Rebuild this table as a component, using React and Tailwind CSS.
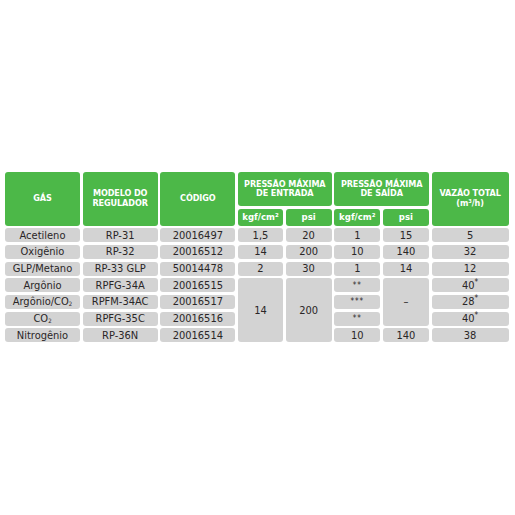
import React from "react";

const font = { fontFamily: '"DejaVu Sans Condensed", "Liberation Sans Narrow", "Liberation Sans", sans-serif' };

// grid placement per cell, written out so Tailwind sees every class
const Head = ({ className = "", children }) => (
  <div
    className={`bg-[#4cb848] rounded-[3px] flex items-center justify-center text-center text-white font-bold uppercase text-[9px] ${className}`}
  >
    <div className="leading-[9.5px] tracking-[-0.1px]">{children}</div>
  </div>
);

const Sub = ({ className = "", children }) => (
  <div
    className={`bg-[#4cb848] rounded-[3px] flex items-center justify-center text-white font-bold text-[9.5px] ${className}`}
  >
    <span>{children}</span>
  </div>
);

const Cell = ({ className = "", children }) => (
  <div
    className={`bg-[#d3d3d3] rounded-[3px] flex items-center justify-center text-[#2a2627] text-[11px] leading-none ${className}`}
  >
    <span>{children}</span>
  </div>
);

const Sup = ({ children }) => <sup className="text-[8px]">{children}</sup>;
const Stars = ({ n }) => <span className="text-[8px] tracking-[1px] relative -top-[1px]">{n}</span>;
const Sub2 = () => <sub className="text-[6px] relative top-[1px]">2</sub>;

const rows = [
  ["Acetileno", "RP-31", "20016497"],
  ["Oxigênio", "RP-32", "20016512"],
  ["GLP/Metano", "RP-33 GLP", "50014478"],
  ["Argônio", "RPFG-34A", "20016515"],
  [<>Argônio/CO<Sub2 /></>, "RPFM-34AC", "20016517"],
  [<>CO<Sub2 /></>, "RPFG-35C", "20016516"],
  ["Nitrogênio", "RP-36N", "20016514"],
];

export default function App() {
  return (
    <div className="w-[515px] h-[515px] bg-white pt-[172px] pl-[5px]" style={font}>
      <div className="grid grid-cols-[75px_75px_75px_45px_46px_46px_46px_77px] grid-rows-[34px_17px_14px_14px_14px_14px_14px_14px_14px] gap-[2.67px]">
        {/* header */}
        <Head className="col-start-1 row-start-1 row-span-2">Gás</Head>
        <Head className="col-start-2 row-start-1 row-span-2">
          Modelo do
          <br />
          Regulador
        </Head>
        <Head className="col-start-3 row-start-1 row-span-2">Código</Head>
        <Head className="col-start-4 col-span-2 row-start-1">
          Pressão máxima
          <br />
          de entrada
        </Head>
        <Head className="col-start-6 col-span-2 row-start-1">
          Pressão máxima
          <br />
          de saída
        </Head>
        <Head className="col-start-8 row-start-1 row-span-2">
          Vazão total
          <br />
          <span className="normal-case">(m³/h)</span>
        </Head>
        <Sub className="col-start-4 row-start-2">kgf/cm²</Sub>
        <Sub className="col-start-5 row-start-2">psi</Sub>
        <Sub className="col-start-6 row-start-2">kgf/cm²</Sub>
        <Sub className="col-start-7 row-start-2">psi</Sub>

        {/* first three columns */}
        {rows.map((r, i) => (
          <React.Fragment key={i}>
            <Cell className="col-start-1">{r[0]}</Cell>
            <Cell className="col-start-2">{r[1]}</Cell>
            <Cell className="col-start-3">{r[2]}</Cell>
          </React.Fragment>
        ))}

        {/* Acetileno */}
        <Cell className="col-start-4 row-start-3">1,5</Cell>
        <Cell className="col-start-5 row-start-3">20</Cell>
        <Cell className="col-start-6 row-start-3">1</Cell>
        <Cell className="col-start-7 row-start-3">15</Cell>
        <Cell className="col-start-8 row-start-3">5</Cell>
        {/* Oxigênio */}
        <Cell className="col-start-4 row-start-4">14</Cell>
        <Cell className="col-start-5 row-start-4">200</Cell>
        <Cell className="col-start-6 row-start-4">10</Cell>
        <Cell className="col-start-7 row-start-4">140</Cell>
        <Cell className="col-start-8 row-start-4">32</Cell>
        {/* GLP */}
        <Cell className="col-start-4 row-start-5">2</Cell>
        <Cell className="col-start-5 row-start-5">30</Cell>
        <Cell className="col-start-6 row-start-5">1</Cell>
        <Cell className="col-start-7 row-start-5">14</Cell>
        <Cell className="col-start-8 row-start-5">12</Cell>
        {/* merged block */}
        <Cell className="col-start-4 row-start-6 row-span-4">14</Cell>
        <Cell className="col-start-5 row-start-6 row-span-4">200</Cell>
        <Cell className="col-start-6 row-start-6"><Stars n="**" /></Cell>
        <Cell className="col-start-6 row-start-7"><Stars n="***" /></Cell>
        <Cell className="col-start-6 row-start-8"><Stars n="**" /></Cell>
        <Cell className="col-start-7 row-start-6 row-span-3">–</Cell>
        <Cell className="col-start-8 row-start-6">40<Sup>*</Sup></Cell>
        <Cell className="col-start-8 row-start-7">28<Sup>*</Sup></Cell>
        <Cell className="col-start-8 row-start-8">40<Sup>*</Sup></Cell>
        {/* Nitrogênio */}
        <Cell className="col-start-6 row-start-9">10</Cell>
        <Cell className="col-start-7 row-start-9">140</Cell>
        <Cell className="col-start-8 row-start-9">38</Cell>
      </div>
    </div>
  );
}
